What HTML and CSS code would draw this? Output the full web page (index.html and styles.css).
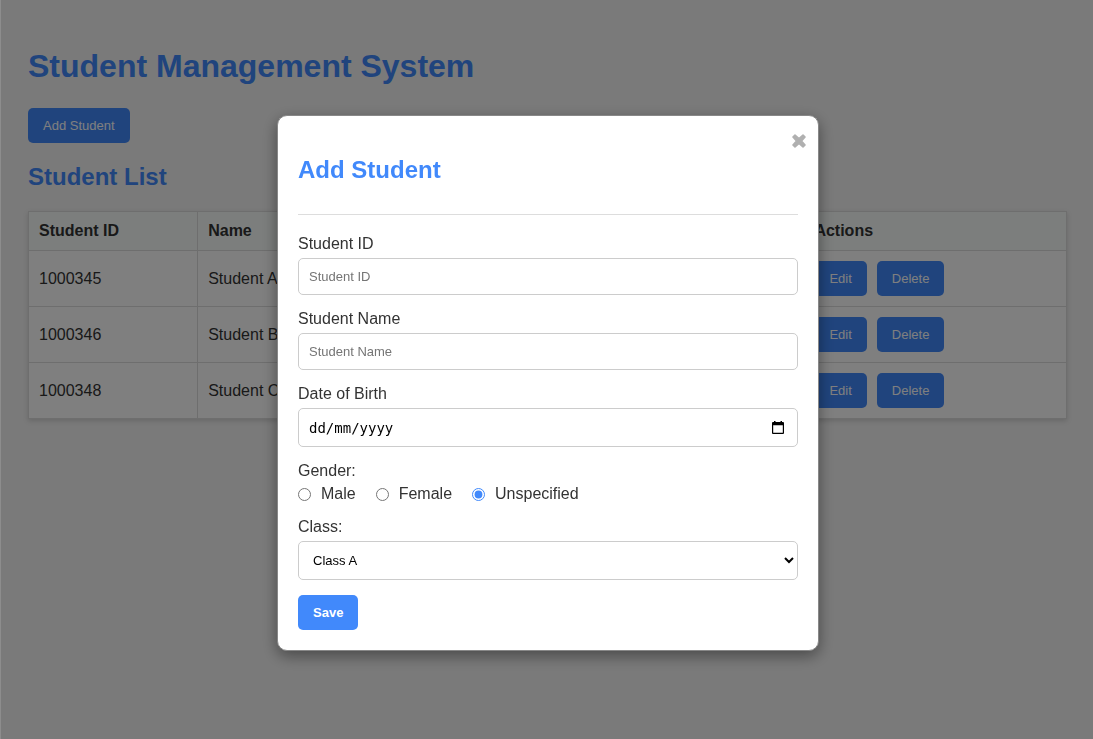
FILE: index.html
```html
<!DOCTYPE html>
<html lang="en-GB">
<head>
<meta charset="utf-8">
<meta name="viewport" content="width=device-width, initial-scale=1">
<title>Student Management System</title>
<link rel="stylesheet" href="styles.css">
</head>
<body>
<main class="page">
  <h1 class="page-title">Student Management System</h1>
  <button type="button" class="btn">Add Student</button>
  <h2 class="section-title">Student List</h2>
  <table class="students">
    <thead>
      <tr><th class="col-id">Student ID</th><th class="col-name">Name</th><th>Actions</th></tr>
    </thead>
    <tbody>
      <tr><td>1000345</td><td>Student A</td><td><div class="actions"><button type="button" class="btn">Edit</button><button type="button" class="btn">Delete</button></div></td></tr>
      <tr><td>1000346</td><td>Student B</td><td><div class="actions"><button type="button" class="btn">Edit</button><button type="button" class="btn">Delete</button></div></td></tr>
      <tr><td>1000348</td><td>Student C</td><td><div class="actions"><button type="button" class="btn">Edit</button><button type="button" class="btn">Delete</button></div></td></tr>
    </tbody>
  </table>
</main>

<div class="overlay">
  <section class="modal" role="dialog" aria-modal="true" aria-labelledby="modal-title">
    <button type="button" class="close" aria-label="Close">
      <svg viewBox="0 0 14 14" width="14" height="14" aria-hidden="true"><path d="M3 1 7 4.500 11 1 13 3 9.500 7 13 11 11 13 7 9.500 3 13 1 11 4.500 7 1 3Z" fill="currentColor" stroke="currentColor" stroke-width="1.600" stroke-linejoin="round"/></svg>
    </button>
    <h2 class="modal-title" id="modal-title">Add Student</h2>
    <form class="form">
      <div class="field">
        <label for="student-id">Student ID</label>
        <input class="control" type="text" id="student-id" placeholder="Student ID">
      </div>
      <div class="field">
        <label for="student-name">Student Name</label>
        <input class="control" type="text" id="student-name" placeholder="Student Name">
      </div>
      <div class="field">
        <label for="dob">Date of Birth</label>
        <div class="control control-tall date">
          <input class="date-input" type="text" id="dob" inputmode="numeric" placeholder="dd/mm/yyyy">
          <button type="button" class="date-button" aria-label="Choose date">
            <svg viewBox="0 0 12 13" width="12" height="13" aria-hidden="true"><path d="M2 0h1.500v1h5V0H10v1h1q1 0 1 1v10q0 1-1 1H1q-1 0-1-1V2q0-1 1-1h1ZM1.200 4.200v7.600h9.600V4.200Z" fill="currentColor" fill-rule="evenodd"/></svg>
          </button>
        </div>
      </div>
      <div class="field" role="radiogroup" aria-labelledby="gender-label">
        <span id="gender-label">Gender:</span>
        <div class="radios">
          <label class="radio"><input type="radio" name="gender">Male</label>
          <label class="radio"><input type="radio" name="gender">Female</label>
          <label class="radio"><input type="radio" name="gender" checked>Unspecified</label>
        </div>
      </div>
      <div class="field">
        <label for="class">Class:</label>
        <select class="control control-tall" id="class"><option>Class A</option></select>
      </div>
      <button type="submit" class="btn btn-save">Save</button>
    </form>
  </section>
</div>
</body>
</html>
```
FILE: styles.css
```css
* { box-sizing: border-box; }

body {
  margin: 0;
  background: #f4f4f4;
  color: #333;
  font: 16px/18px "Liberation Sans", Arial, sans-serif;
}

.page { padding: 48px 26px 28px 28px; }

.page-title,
.section-title,
.modal-title { color: #4189fb; font-weight: bold; }

.page-title { margin: 0 0 24px; font-size: 32px; line-height: 36px; }
.section-title { margin: 20px 0; font-size: 24px; line-height: 28px; }

.btn {
  display: block;
  height: 35px;
  padding: 0 15px;
  border: 0;
  border-radius: 5px;
  background: #4189fb;
  color: #fff;
  font: 13px/15px "Liberation Sans", Arial, sans-serif;
  cursor: pointer;
}

.students {
  width: 100%;
  border-collapse: collapse;
  background: #fff;
  box-shadow: 0 2px 5px rgba(0, 0, 0, 0.15);
}
.students th,
.students td { padding: 10px; border: 1px solid #ddd; text-align: left; }
.students th { background: #f8fdfb; }
.col-id { width: 16.3%; }
.col-name { width: 58.4%; }
.actions { display: flex; gap: 10px; }

.overlay {
  position: fixed;
  inset: 0;
  display: flex;
  align-items: flex-start;
  justify-content: center;
  padding: 115px 0 20px 2px;
  overflow: auto;
  border-left: 1px solid rgba(255, 255, 255, 0.15);
  background: rgba(0, 0, 0, 0.5);
}

.modal {
  position: relative;
  width: 100%;
  max-width: 542px;
  padding: 40px 20px 20px;
  border: 1px solid #888;
  border-radius: 10px;
  background: #fff;
  box-shadow: 0 5px 15px rgba(0, 0, 0, 0.4);
}
.modal-title { margin: 0 0 30px; font-size: 24px; line-height: 28px; }

.close {
  position: absolute;
  top: 18px;
  right: 12px;
  display: flex;
  padding: 0;
  border: 0;
  background: none;
  color: #b0b0b0;
  cursor: pointer;
}

.form {
  display: flex;
  flex-direction: column;
  align-items: stretch;
  gap: 15px;
  padding-top: 20px;
  border-top: 1px solid #ddd;
}
.field { display: flex; flex-direction: column; gap: 5px; }

.control {
  width: 100%;
  height: 37px;
  padding: 0 10px;
  border: 1px solid #ccc;
  border-radius: 5px;
  background: #fff;
  color: #000;
  font: 13px/15px "Liberation Sans", Arial, sans-serif;
}
.control::placeholder { color: #757575; }
.control-tall { height: 39px; }

.date { display: flex; align-items: center; padding-right: 13px; }
.date-input {
  flex: 1;
  min-width: 0;
  padding: 0;
  border: 0;
  background: none;
  color: #000;
  font: 14px/18px "DejaVu Sans Mono", monospace;
}
.date-input::placeholder { color: #000; opacity: 1; }
.date-button {
  display: flex;
  padding: 0;
  border: 0;
  background: none;
  color: #000;
  cursor: pointer;
}

.radios { display: flex; gap: 20px; }
.radio { display: flex; align-items: center; gap: 10px; }
.radio input { width: 13px; height: 13px; margin: 0; accent-color: #4189fb; }

.btn-save { align-self: flex-start; font-weight: bold; }
```
